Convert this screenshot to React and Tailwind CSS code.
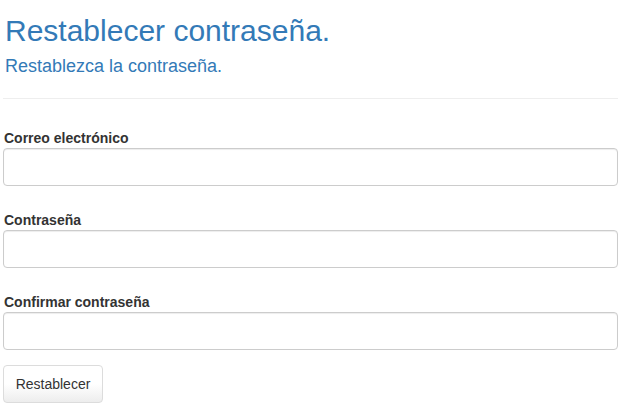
export default function App() {
  const fields = ["Correo electrónico", "Contraseña", "Confirmar contraseña"];
  return (
    <div
      className="w-[621px] h-[419px] bg-white px-[3px] overflow-hidden"
      style={{ fontFamily: '"Liberation Sans", Arial, sans-serif' }}
    >
      <h2 className="mt-[14px] ml-[2px] text-[30px] leading-[33px] font-normal text-[#337ab7]">
        Restablecer contraseña.
      </h2>
      <h4 className="mt-[9px] ml-[2px] text-[18px] leading-[20px] font-normal text-[#337ab7]">
        Restablezca la contraseña.
      </h4>
      <hr className="mt-[22px] border-0 border-t border-[#eeeeee]" />
      <div className="mt-[29px] flex flex-col gap-[24px]">
        {fields.map((f) => (
          <div key={f} className="flex flex-col">
            <label className="ml-[1px] text-[14px] leading-[20px] font-bold text-[#333333]">
              {f}
            </label>
            <input
              type={f === "Correo electrónico" ? "email" : "password"}
              className="h-[38px] w-full rounded-[4px] border border-[#cccccc] bg-white px-3 text-[14px] shadow-[inset_0_1px_1px_rgba(0,0,0,0.075)] outline-none"
            />
          </div>
        ))}
      </div>
      <button
        className="mt-[15px] h-[38px] w-[100px] rounded-[4px] border border-[#dcdcdc] bg-gradient-to-b from-white from-50% to-[#ededed] text-[14px] text-[#333333]"
      >
        Restablecer
      </button>
    </div>
  );
}
